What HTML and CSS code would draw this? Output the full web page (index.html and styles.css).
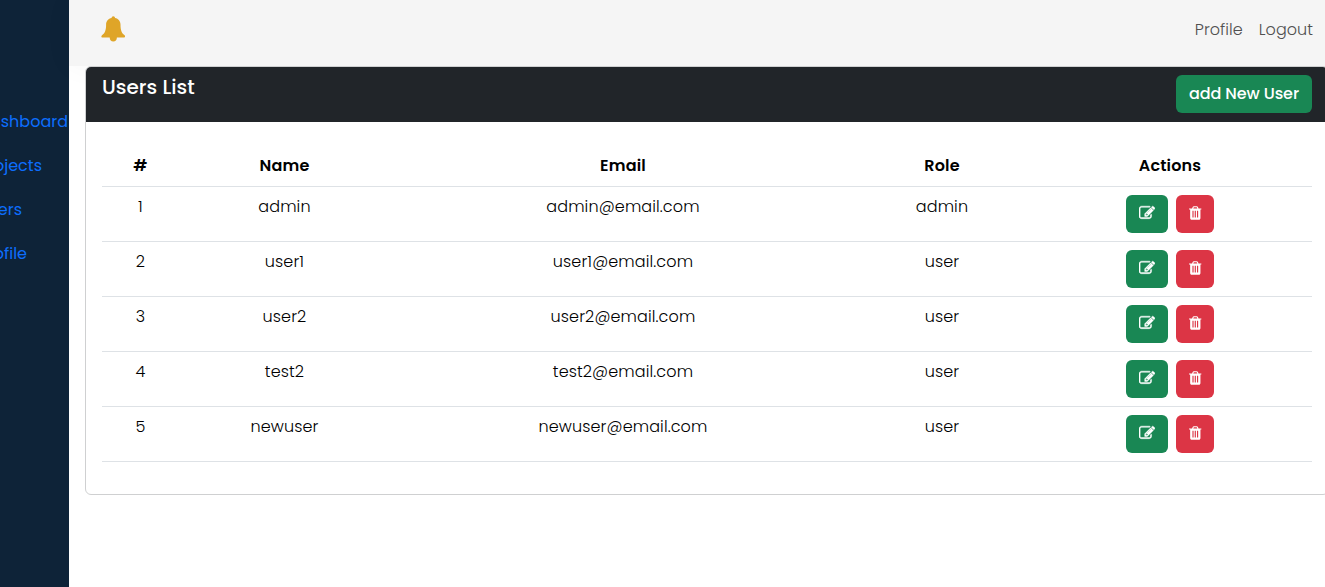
FILE: index.html
```html
<!DOCTYPE html>
<html lang="en">
<head>
<meta charset="utf-8">
<title>Users List</title>
<link rel="stylesheet" href="styles.css">
</head>
<body>
<svg class="sprite" aria-hidden="true">
  <symbol id="edit" viewBox="0 0 1792 1792"><path d="M888 1184l116-116-152-152-116 116v56h96v96h56zm440-720q-16-16-33 1l-350 350q-17 17-1 33t33-1l350-350q17-17 1-33zm80 594v190q0 119-84.500 203.500t-203.500 84.500h-832q-119 0-203.500-84.500t-84.500-203.500v-832q0-119 84.500-203.500t203.500-84.500h832q63 0 117 25 15 7 18 23 3 17-9 29l-49 49q-14 14-32 8-23-6-45-6h-832q-66 0-113 47t-47 113v832q0 66 47 113t113 47h832q66 0 113-47t47-113v-126q0-13 9-22l64-64q15-15 35-7t20 29zm-96-738l288 288-672 672h-288v-288zm444 132l-92 92-288-288 92-92q28-28 68-28t68 28l152 152q28 28 28 68t-28 68z"/></symbol>
  <symbol id="trash" viewBox="192 0 1408 1792"><path d="M704 1376v-704q0-14-9-23t-23-9h-64q-14 0-23 9t-9 23v704q0 14 9 23t23 9h64q14 0 23-9t9-23zm256 0v-704q0-14-9-23t-23-9h-64q-14 0-23 9t-9 23v704q0 14 9 23t23 9h64q14 0 23-9t9-23zm256 0v-704q0-14-9-23t-23-9h-64q-14 0-23 9t-9 23v704q0 14 9 23t23 9h64q14 0 23-9t9-23zm-544-992h448l-48-117q-7-9-17-11h-317q-10 2-17 11zm928 32v64q0 14-9 23t-23 9h-96v948q0 83-47 143.500t-113 60.500h-832q-66 0-113-58.500t-47-141.500v-952h-96q-14 0-23-9t-9-23v-64q0-14 9-23t23-9h309l70-167q15-37 54-63t79-26h320q40 0 79 26t54 63l70 167h309q14 0 23 9t9 23z"/></symbol>
</svg>
<div class="app">
  <nav class="sidebar">
    <a class="side-link dashboard">Dashboard</a>
    <a class="side-link projects">Projects</a>
    <a class="side-link users">Users</a>
    <a class="side-link profile">Profile</a>
  </nav>
  <div class="content">
    <header class="topbar">
      <svg class="bell" viewBox="0 0 24 26"><path d="M12.300 .3c1 0 1.700.7 1.700 1.700 3.400.7 5.500 3.200 5.500 6.500 0 6.200 1.300 8.700 4.300 11 .8.700.4 2-.6 2H15.900c0 2.400-1.500 4.100-3.600 4.100s-3.600-1.700-3.600-4.100H1.400c-1 0-1.400-1.300-.6-2 3-2.300 4.300-4.800 4.300-11 0-3.300 2.100-5.800 5.500-6.500 0-1 .7-1.700 1.700-1.700z"/></svg>
      <div class="account"><a class="acc-profile">Profile</a><a class="acc-logout">Logout</a></div>
    </header>
    <main class="card">
      <div class="card-header"><h5 class="title">Users List</h5><a class="btn add"><span>add New User</span></a></div>
      <div class="card-body">
        <table class="users-table">
          <colgroup><col class="c-id"><col class="c-name"><col class="c-email"><col class="c-role"><col class="c-actions"></colgroup>
          <thead><tr><th>#</th><th>Name</th><th>Email</th><th>Role</th><th>Actions</th></tr></thead>
          <tbody>
            <tr><td>1</td><td>admin</td><td>admin@email.com</td><td>admin</td><td><div class="actions"><a class="btn edit"><svg><use href="#edit"/></svg></a><a class="btn trash"><svg><use href="#trash"/></svg></a></div></td></tr>
            <tr><td>2</td><td>user1</td><td>user1@email.com</td><td>user</td><td><div class="actions"><a class="btn edit"><svg><use href="#edit"/></svg></a><a class="btn trash"><svg><use href="#trash"/></svg></a></div></td></tr>
            <tr><td>3</td><td>user2</td><td>user2@email.com</td><td>user</td><td><div class="actions"><a class="btn edit"><svg><use href="#edit"/></svg></a><a class="btn trash"><svg><use href="#trash"/></svg></a></div></td></tr>
            <tr><td>4</td><td>test2</td><td>test2@email.com</td><td>user</td><td><div class="actions"><a class="btn edit"><svg><use href="#edit"/></svg></a><a class="btn trash"><svg><use href="#trash"/></svg></a></div></td></tr>
            <tr><td>5</td><td>newuser</td><td>newuser@email.com</td><td>user</td><td><div class="actions"><a class="btn edit"><svg><use href="#edit"/></svg></a><a class="btn trash"><svg><use href="#trash"/></svg></a></div></td></tr>
          </tbody>
        </table>
      </div>
    </main>
  </div>
</div>
</body>
</html>
```
FILE: styles.css
```css
* { box-sizing: border-box; }
body {
  margin: 0;
  overflow: hidden;
  background: #fff;
  color: #000;
  font: 400 16px/24px Poppins, Inter, sans-serif;
}
.sprite { display: none; }
.app { display: flex; height: 587px; overflow: hidden; }
.sidebar {
  flex: 0 0 69px;
  display: flex;
  flex-direction: column;
  gap: 20px;
  padding-top: 110px;
  overflow: hidden;
  background: #0e2338;
}
.side-link { display: flex; justify-content: flex-end; color: #0d6efd; }
.dashboard { width: 68px; }
.projects { width: 42px; }
.users { width: 22px; }
.profile { width: 27px; }
.content { flex: 1; min-width: 0; }
.topbar {
  display: flex;
  justify-content: space-between;
  height: 66px;
  padding: 16px 12px 0 32px;
  background: #f5f5f5;
  box-shadow: 0 0 30px rgba(0, 0, 0, .04);
}
.bell { width: 24px; height: 26px; fill: #dfa528; }
.account { display: flex; gap: 16px; padding-top: 2px; color: #505050; font-weight: 300; letter-spacing: .05px; }
.card {
  width: 1244px;
  margin-left: 16px;
  border: 1px solid #cfd0d1;
  border-radius: 6px;
  background: #fff;
}
.card-header {
  display: flex;
  justify-content: space-between;
  align-items: flex-start;
  height: 55px;
  padding: 8px 16px;
  border-radius: 5px 5px 0 0;
  background: #212529;
  color: #fff;
}
.title { margin: 0; font-size: 20px; font-weight: 500; line-height: 24px; }
.btn {
  display: flex;
  align-items: center;
  justify-content: center;
  height: 38px;
  border-radius: 6px;
  color: #fff;
}
.add { width: 136px; background: #198754; font-weight: 500; letter-spacing: -.1px; }
.card-body { padding: 24px 16px 32px; }
.users-table { width: 1210px; border-collapse: separate; border-spacing: 0; table-layout: fixed; text-align: center; }
.c-id { width: 77px; }
.c-name { width: 211px; }
.c-email { width: 466px; }
.c-role { width: 172px; }
.c-actions { width: 284px; }
.users-table th { height: 41px; padding: 8px; border-bottom: 1px solid #dee2e6; font-weight: 600; letter-spacing: .15px; }
.users-table td { height: 55px; padding: 8px; border-bottom: 1px solid #dee2e6; font-weight: 300; letter-spacing: .12px; vertical-align: top; }
.actions { display: flex; justify-content: center; gap: 8px; }
.actions svg { height: 16px; margin-bottom: 2px; fill: #fff; stroke: #fff; stroke-width: 50; overflow: visible; }
.edit { width: 42px; background: #198754; }
.edit svg { width: 16px; margin-right: 1px; }
.trash { width: 38px; background: #dc3545; }
.trash svg { width: 12.6px; stroke-width: 0; }
```
